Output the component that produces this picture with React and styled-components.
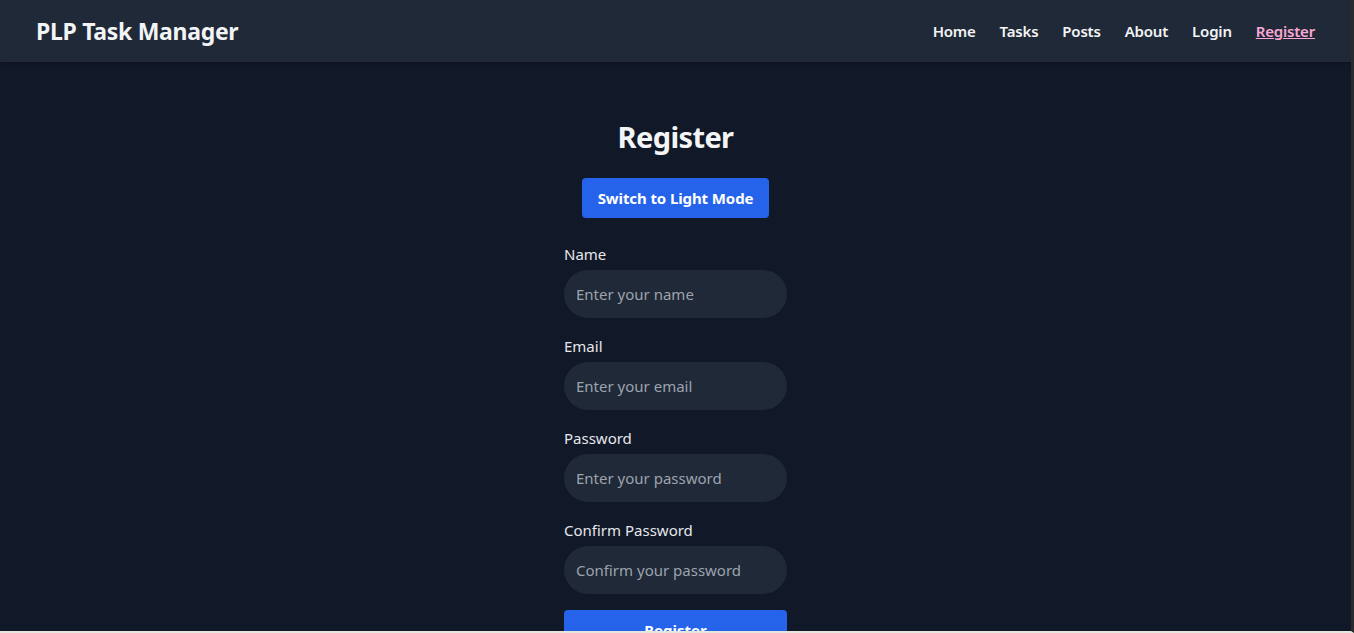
import React from "react";
import styled, { createGlobalStyle } from "styled-components";

const fontStack = `"Noto Sans", "Open Sans", sans-serif`;

const GlobalStyle = createGlobalStyle`
  html, body {
    margin: 0;
    padding: 0;
    background: #111827;
    font-family: ${fontStack};
  }
  * { box-sizing: border-box; }
`;

const navLinks = ["Home", "Tasks", "Posts", "About", "Login", "Register"];

const fields = [
  { label: "Name", placeholder: "Enter your name", type: "text" },
  { label: "Email", placeholder: "Enter your email", type: "email" },
  { label: "Password", placeholder: "Enter your password", type: "password" },
  { label: "Confirm Password", placeholder: "Confirm your password", type: "password" },
];

export default function App() {
  return (
    <Page>
      <GlobalStyle />
      <Header>
        <Logo>PLP Task Manager</Logo>
        <Nav>
          {navLinks.map((link) => (
            <NavLink key={link} href="#" $active={link === "Register"}>
              {link}
            </NavLink>
          ))}
        </Nav>
      </Header>
      <Main>
        <Title>Register</Title>
        <ThemeButton type="button">Switch to Light Mode</ThemeButton>
        <Form onSubmit={(e) => e.preventDefault()}>
          {fields.map((f) => (
            <Field key={f.label}>
              <Label>{f.label}</Label>
              <Input type={f.type} placeholder={f.placeholder} />
            </Field>
          ))}
          <SubmitButton type="submit">Register</SubmitButton>
        </Form>
      </Main>
    </Page>
  );
}

const Page = styled.div`
  height: 633px;
  overflow: hidden;
  background: #111827;
  border-right: 3px solid #2b2b2b;
  border-bottom: 2px solid #e5e7df;
  display: flex;
  flex-direction: column;
`;

const Header = styled.header`
  height: 62px;
  flex-shrink: 0;
  display: flex;
  align-items: center;
  justify-content: space-between;
  padding: 0 36px;
  background: #1f2937;
  box-shadow: 0 1px 3px rgba(0, 0, 0, 0.3);
  position: relative;
  z-index: 1;
`;

const Logo = styled.h1`
  margin: 0;
  font-size: 23px;
  letter-spacing: -0.3px;
  font-weight: 700;
  color: #f3f4f6;
`;

const Nav = styled.nav`
  display: flex;
  gap: 24px;
`;

const NavLink = styled.a`
  font-size: 15px;
  letter-spacing: -0.2px;
  font-weight: 600;
  color: ${(p) => (p.$active ? "#f9a8d4" : "#f3f4f6")};
  text-decoration: ${(p) => (p.$active ? "underline" : "none")};
`;

const Main = styled.main`
  display: flex;
  flex-direction: column;
  align-items: center;
  padding-top: 57px;
`;

const Title = styled.h2`
  margin: 0 0 23px;
  font-size: 29px;
  letter-spacing: -0.6px;
  line-height: 36px;
  font-weight: 700;
  color: #f3f4f6;
`;

const ThemeButton = styled.button`
  height: 40px;
  padding: 0 16px;
  border: none;
  border-radius: 4px;
  background: #2563eb;
  color: #ffffff;
  font-family: ${fontStack};
  font-size: 15px;
  letter-spacing: -0.1px;
  font-weight: 700;
  margin-bottom: 24px;
`;

const Form = styled.form`
  width: 223px;
  display: flex;
  flex-direction: column;
`;

const Field = styled.div`
  display: flex;
  flex-direction: column;
  gap: 4px;
  margin-bottom: 16px;
`;

const Label = styled.label`
  font-size: 15px;
  line-height: 24px;
  color: #e5e7eb;
`;

const Input = styled.input`
  height: 48px;
  padding: 0 12px;
  border: none;
  border-radius: 24px;
  background: #1f2937;
  color: #f3f4f6;
  font-family: ${fontStack};
  font-size: 15px;
  outline: none;

  &::placeholder {
    color: #9ca3af;
  }
`;

const SubmitButton = styled.button`
  height: 40px;
  border: none;
  border-radius: 4px;
  background: #2563eb;
  color: #ffffff;
  font-family: ${fontStack};
  font-size: 15px;
  font-weight: 700;
`;
